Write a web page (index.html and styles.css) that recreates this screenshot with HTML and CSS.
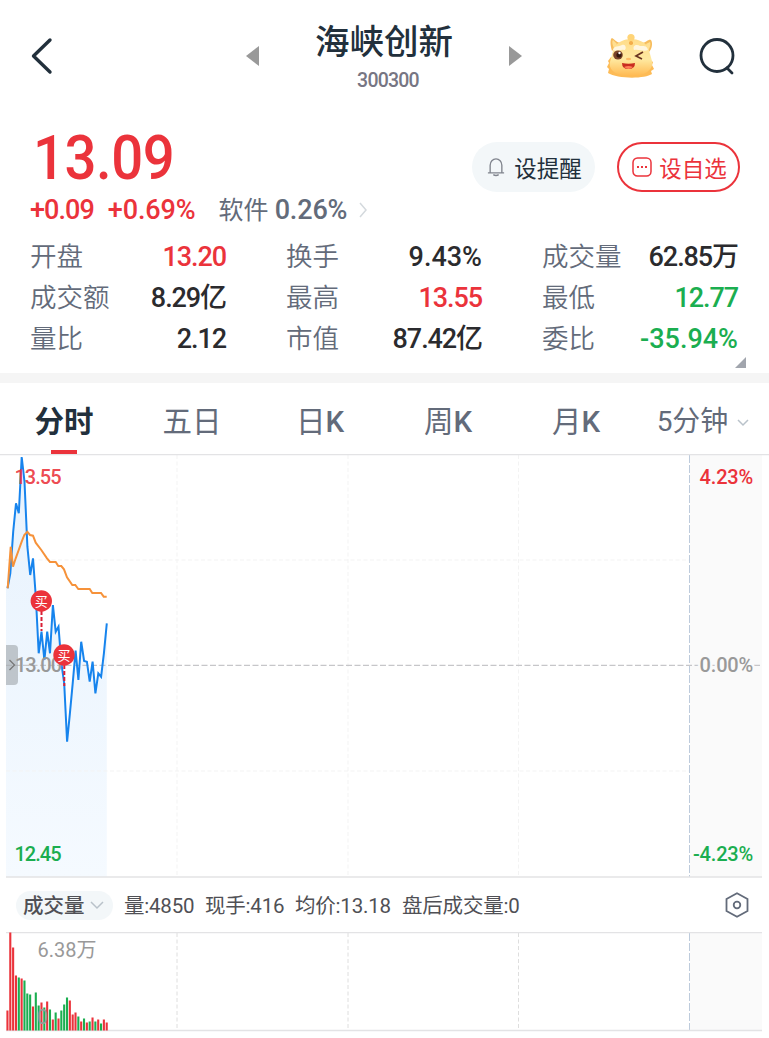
FILE: index.html
```
<!DOCTYPE html>
<html lang="zh-CN">
  <head>
    <meta charset="UTF-8" />
    <meta name="viewport" content="width=device-width, initial-scale=1.0" />
    <title>海峡创新 300300</title>
    <link rel="stylesheet" href="styles.css">
  </head>
  <body>
    <header class="header">
      <svg class="back" width="24" height="40" viewBox="0 0 24 40">
        <path d="M20 4 3.500 20 20 36" />
      </svg>
      <svg class="arrow prev" width="14" height="20" viewBox="0 0 14 20"><path d="M0 10 13 0V20Z" /></svg>
      <div class="title">
        <h1>海峡创新</h1>
        <span>300300</span>
      </div>
      <svg class="arrow next" width="14" height="20" viewBox="0 0 14 20"><path d="M14 10 1 0V20Z" /></svg>
      <svg class="mascot" width="50" height="46" viewBox="0 0 50 46">
        <defs>
          <linearGradient id="face" x1="0" y1="0" x2="0" y2="1">
            <stop offset="0" stop-color="#ffdc8a" />
            <stop offset=".55" stop-color="#ffe9a0" />
            <stop offset="1" stop-color="#ffb951" />
          </linearGradient>
        </defs>
        <path fill="#fdbb56" d="M5 24 2 28l1 2-2 4 2 2-1 4c9 6 37 6 44 1l-1-3 3-2-2-4 1-3-3-2-2-5Z" />
        <path fill="#f7bd5e" d="M6 18C4 12 4 6 6 5c2 1 4 4 8 5ZM37 10c4-1 5-4 8-3 2 3 1 9-2 12Z" />
        <path fill="#ffdf91" d="M8 15C6 11 6 8 7 7l4 4ZM40 11l4-2c1 2 0 6-2 8Z" />
        <path fill="url(#face)" d="M8 14C12 9 18 6 25 6s14 3 17 8l4 14c2 9-8 15-21 15S2 38 4 29Z" />
        <ellipse cx="25" cy="4.500" rx="3.600" ry="3.500" fill="#ffd477" />
        <rect x="23" y="8" width="4" height="4" rx="1.800" fill="#f3ad4b" />
        <path fill="#fff6df" d="M7 17c1-5 6-3 9-5 4-2 5 5 2 5-4-1-7 2-11 0ZM28 17c-2-5 3-6 6-4 3 0 7-1 8 4-4 2-9-1-14 0Z" />
        <ellipse cx="12" cy="22" rx="4.800" ry="4.600" fill="#7b452b" />
        <circle cx="13" cy="22" r="2.600" fill="#35170f" />
        <circle cx="13.500" cy="20" r="1.200" fill="#fff" />
        <path d="m37 19-7 4 6 3" fill="none" stroke="#6b3521" stroke-width="1.700" />
        <ellipse cx="22.500" cy="26" rx="2.600" ry="1.300" fill="#ffbd68" />
        <path fill="#c92d20" d="M16 30q6.500 1.500 13 0 0 6-6.500 6T16 30Z" />
        <path fill="#ff7d57" d="M18 34q4.500-2 9 0-4.500 4-9 0Z" />
      </svg>
      <svg class="search" width="36" height="38" viewBox="0 0 36 38">
        <circle cx="18" cy="18.500" r="16" />
        <path d="m28 31 5 5" stroke-linecap="round" />
      </svg>
    </header>

    <section class="quote">
      <div class="quote-top">
        <div class="price">13.09</div>
        <div class="actions">
          <button class="btn">
            <svg width="18" height="22" viewBox="0 0 20 22">
              <path d="M1 17.500h18M3.500 17V9a6.500 7 0 0 1 13 0v8M7 19.500q3 2 6 0" />
            </svg>
            设提醒
          </button>
          <button class="btn btn-red">
            <svg width="20" height="20" viewBox="0 0 20 20">
              <rect x="1" y="1" width="18" height="18" rx="4.500" />
              <path d="M5 10h2M9 10h2M13 10h2" stroke-width="2" />
            </svg>
            设自选
          </button>
        </div>
      </div>
      <div class="change">
        <span class="up">+0.09</span>
        <span class="up">+0.69%</span>
        <span class="sector">软件 <b>0.26%</b></span>
        <svg width="9" height="16" viewBox="0 0 9 16"><path d="m1 1 6 7-6 7" /></svg>
      </div>
      <dl class="stats">
        <div><dt>开盘</dt><dd class="up">13.20</dd></div>
        <div><dt>换手</dt><dd class="percent">9.43%</dd></div>
        <div><dt>成交量</dt><dd>62.85万</dd></div>
        <div><dt>成交额</dt><dd>8.29亿</dd></div>
        <div><dt>最高</dt><dd class="up">13.55</dd></div>
        <div><dt>最低</dt><dd class="down">12.77</dd></div>
        <div><dt>量比</dt><dd>2.12</dd></div>
        <div><dt>市值</dt><dd>87.42亿</dd></div>
        <div><dt>委比</dt><dd class="down percent">-35.94%</dd></div>
      </dl>
      <svg class="expand" width="11" height="11" viewBox="0 0 11 11"><path d="M11 0V11H0Z" /></svg>
    </section>

    <nav class="tabs">
      <a class="active">分时</a>
      <a>五日</a>
      <a>日<b>K</b></a>
      <a>周<b>K</b></a>
      <a>月<b>K</b></a>
      <a class="minutes"><span>5分钟</span>
        <svg width="12" height="8" viewBox="0 0 12 8"><path d="m1 1 5 5 5-5" /></svg>
      </a>
    </nav>

    <svg class="chart" width="769" height="424" viewBox="0 454 769 424">
      <defs>
        <linearGradient id="area" x1="0" y1="0" x2="0" y2="1">
          <stop offset="0" stop-color="#e7f2fd" />
          <stop offset="1" stop-color="#f5faff" />
        </linearGradient>
      </defs>
      <rect class="side" x="690" y="455" width="72" height="422" />
      <path class="area" fill="url(#area)" />
      <path class="grid faint" d="M6 560H689M6 771H689M177 455V877M348 455V877M518.500 455V877" />
      <path class="session" d="M689.500 455V877" />
      <path class="border" d="M0 454.500H769M6 877H762" />
      <path class="zero" d="M6 665.300H762" />
      <polyline class="line" />
      <polyline class="avg" points="7.700,588.300 10.700,546.700 13,566.700 15.700,558.300 18.700,550 21.700,541.700 24.300,535 27.300,531.700 30,535 33,535.700 35.700,542.700 41.300,550 47,558.300 50,562 55.700,562 58.300,566 61.300,566 64,569.300 67,577.300 72.300,585 75.300,585 78.300,589 89.700,589 92.300,593 101,593 103.700,596.700 106.700,596.700" />
      <path class="handle" d="M6 645h8q4 0 4 4v32q0 4-4 4H6Z" />
      <path class="handle-arrow" d="m9.500 660 5 5-5 5" />
      <text class="up top" x="14.500" y="484">13.55</text>
      <text class="up end" x="753" y="484">4.23%</text>
      <text class="down" x="14.500" y="861">12.45</text>
      <text class="down end" x="753" y="861">-4.23%</text>
      <text class="muted" x="15" y="672">13.00</text>
      <text class="muted end halo" x="753" y="672">0.00%</text>
      <g class="buy">
        <path d="M41.500 611V631M64.300 665V686" />
        <circle cx="41.300" cy="601" r="10.700" />
        <circle cx="64" cy="655" r="10.700" />
        <text x="41.300" y="606">买</text>
        <text x="64" y="660">买</text>
      </g>
    </svg>

    <div class="indicator">
      <span class="pill">成交量
        <svg width="14" height="9" viewBox="0 0 14 9"><path d="m1 1 6 6 6-6" /></svg>
      </span>
      <span class="w-vol">量:4850</span>
      <span class="w-now">现手:416</span>
      <span class="w-avg">均价:13.18</span>
      <span>盘后成交量:0</span>
      <svg class="settings" width="24" height="26" viewBox="0 0 24 26">
        <path d="M12 1.300 22.500 7v12L12 24.700 1.500 19V7Z" />
        <circle cx="12" cy="13" r="3.300" />
      </svg>
    </div>

    <svg class="chart volume" width="769" height="106" viewBox="0 932 769 106">
      <rect class="side" x="690" y="932" width="72" height="98" />
      <path class="grid" d="M177 933V1030M348 933V1030M518.500 933V1030" />
      <path class="session" d="M689.500 933V1030" />
      <path class="border" d="M6 932.500H762M6 1030.500H762" />
      <g class="bars"></g>
      <text class="muted" x="37.500" y="957">6.38万</text>
      <text class="muted" x="37" y="1024">0</text>
    </svg>

    <script>
      const START = 7.5;
      const STEP = 2.836;

      const prices = [
        588.3, 573.3, 531.7, 503.3, 513.3, 457, 481.7, 546.7, 575, 558.3, 598,
        653.3, 631.7, 660, 631.7, 653.3, 605, 631.7, 626.7, 663.3, 683.3, 741.7,
        713.3, 683.3, 650.7, 680, 641.7, 661, 661.7, 681.7, 661.7, 693.3, 673.3,
        676.7, 653.3, 623.3
      ];
      // negative = falling minute
      const volumes = [
        20, 98, 83, 55, -53, 52, -50, -37, -36, 24, -38, -25, 28, -23, 29, -21,
        11, -18, 12, -20, -26, -33, 30, 16, 18, -14, 9, -12, 8, -9, 13, -9, 11,
        -7, 11, 8
      ];

      const points = prices.map((y, i) => `${(START + i * STEP).toFixed(1)},${y}`);
      document.querySelector(".line").setAttribute("points", points.join(" "));
      document
        .querySelector(".area")
        .setAttribute("d", `M6 877V588L${points.join(" ")}V877Z`);

      document.querySelector(".bars").innerHTML = volumes
        .map((v, i) => {
          const h = Math.abs(v);
          const x = (START - 1.1 + i * STEP).toFixed(2);
          return `<rect class="${v > 0 ? "up" : "down"}" x="${x}" y="${1030.5 - h}" width="2.1" height="${h}" />`;
        })
        .join("");
    </script>
  </body>
</html>
```
FILE: styles.css
```
:root {
  --red: #eb333b;
  --green: #1bae50;
  --ink: #22303c;
  --text: #2b2b2e;
  --gray: #636b7a;
  --muted: #999;
}

* {
  box-sizing: border-box;
}

body {
  margin: 0;
  height: 1038px;
  overflow: hidden;
  font-family: Roboto, "Noto Sans CJK SC", sans-serif;
  letter-spacing: -0.03em;
  color: var(--text);
  background: #fff;
}

svg {
  display: block;
  flex: none;
  fill: none;
}

.up {
  color: var(--red);
}
.down {
  color: var(--green);
}

.header {
  display: flex;
  align-items: center;
  height: 112px;
  padding: 0 34px 0 30px;
}
.back {
  stroke: var(--ink);
  stroke-width: 3.4;
  stroke-linecap: round;
  stroke-linejoin: round;
}
.arrow {
  fill: var(--muted);
}
.prev {
  margin-left: 192px;
}
.title {
  width: 248px;
  text-align: center;
}
.title h1 {
  margin: 0;
  font-size: 34.5px;
  line-height: 48px;
  font-weight: 500;
  letter-spacing: 0;
  color: var(--ink);
}
.title span {
  display: block;
  padding-left: 8px;
  font-size: 19.5px;
  line-height: 29px;
  font-weight: 500;
  letter-spacing: -0.04em;
  color: #777683;
}
.mascot {
  margin-left: 84px;
}
.search {
  margin-left: auto;
  stroke: var(--ink);
  stroke-width: 2.8;
}

.quote {
  position: relative;
  height: 271px;
  padding: 20px 30px 0;
  border-bottom: 10px solid #f5f5f5;
}
.quote-top {
  display: flex;
  justify-content: space-between;
  height: 60px;
}
.price {
  padding-left: 3px;
  font-size: 61.5px;
  line-height: 53px;
  font-weight: 500;
  color: var(--red);
  transform: scaleX(0.915);
  transform-origin: 3px 0;
}
.actions {
  display: flex;
  gap: 22px;
  margin: 10px -1px 0 0;
}
.btn {
  display: flex;
  align-items: center;
  justify-content: center;
  gap: 9px;
  width: 123px;
  height: 50px;
  padding: 0 0 0 2px;
  border: 0;
  border-radius: 25px;
  font: 22.5px "Noto Sans CJK SC", sans-serif;
  color: var(--ink);
  background: #f3f7f9;
}
.btn svg {
  stroke: #81858e;
  stroke-width: 1.5;
}
.btn-red {
  gap: 7px;
  border: 2px solid var(--red);
  color: var(--red);
  background: #fff;
}
.btn-red svg {
  stroke: var(--red);
}

.change {
  display: flex;
  align-items: baseline;
  height: 36px;
  font-size: 27px;
  line-height: 37px;
  font-weight: 500;
}
.change .up {
  letter-spacing: -0.035em;
}
.change .up + .up {
  margin-left: 14px;
  letter-spacing: -0.005em;
}
.sector {
  margin: 0 12px 0 23px;
  font-size: 25px;
  font-weight: 400;
  letter-spacing: 0;
  color: var(--gray);
}
.sector b {
  font-size: 27px;
  font-weight: 500;
  letter-spacing: -0.005em;
}
.change svg {
  align-self: center;
  stroke: #d4d9dd;
  stroke-width: 1.5;
}

.stats {
  display: grid;
  grid-template-columns: repeat(3, 196px);
  grid-auto-rows: 41px;
  column-gap: 60px;
  margin: 6px 0 0;
}
.stats div {
  display: flex;
  justify-content: space-between;
  align-items: baseline;
  line-height: 41px;
  white-space: nowrap;
}
.stats dt {
  font: 350 26.5px/41px "Noto Sans CJK SC", sans-serif;
  letter-spacing: 0;
  color: var(--gray);
}
.stats dd {
  margin: 0;
  font-size: 27px;
  font-weight: 500;
  letter-spacing: -0.04em;
}
.stats .percent {
  letter-spacing: 0;
}
.expand {
  position: absolute;
  right: 23px;
  bottom: 5px;
  fill: #a1a5ad;
}

.tabs {
  display: flex;
  height: 71px;
}
.tabs a {
  display: flex;
  justify-content: center;
  position: relative;
  width: 128px;
  font-size: 29.5px;
  line-height: 78px;
  letter-spacing: 0;
  color: var(--gray);
}
.tabs b {
  font-weight: 500;
}
.tabs .active {
  font-weight: 700;
  color: var(--ink);
}
.tabs .active::after {
  content: "";
  position: absolute;
  left: 51px;
  bottom: 0;
  width: 26px;
  height: 4px;
  background: var(--red);
}
.tabs .minutes {
  gap: 9px;
  padding-right: 2px;
  font-size: 28px;
}
.minutes svg {
  margin-top: 36px;
}
.minutes svg,
.pill svg {
  stroke: #b9c2ca;
  stroke-width: 1.5;
}

.chart text {
  font-size: 20px;
  font-weight: 500;
  letter-spacing: -0.05em;
  fill: currentColor;
}
.chart .top {
  fill-opacity: 0.9;
}
.chart .end {
  letter-spacing: -0.01em;
  text-anchor: end;
}
.chart .muted {
  color: var(--muted);
}
.chart .halo {
  paint-order: stroke;
  stroke: #fafafa;
  stroke-width: 5px;
}
.side {
  fill: #fafafa;
}
.border {
  stroke: #e3e3e5;
  stroke-width: 1.5;
}
.grid {
  stroke: #dedede;
  stroke-dasharray: 4 2.5;
}
.faint {
  stroke: #f3f3f3;
}
.session {
  stroke: #bdcbdc;
  stroke-dasharray: 8 2;
}
.zero {
  stroke: #c6c6c9;
  stroke-width: 1.3;
  stroke-dasharray: 6 2.5;
}
.line {
  stroke: #1784ed;
  stroke-width: 2;
}
.avg {
  stroke: #f6923a;
  stroke-width: 2;
}
.handle {
  fill: #a5aaaf;
  fill-opacity: 0.65;
}
.handle-arrow {
  stroke: #777;
  stroke-width: 1.3;
}
.buy path {
  stroke: #d91f35;
  stroke-width: 2;
  stroke-dasharray: 4 2;
}
.buy circle {
  fill: var(--red);
}
.chart .buy text {
  font-size: 13px;
  font-weight: 400;
  letter-spacing: 0;
  text-anchor: middle;
  fill: #fff;
}
.bars rect {
  fill: currentColor;
}
.volume .muted {
  font-weight: 400;
  letter-spacing: 0;
}

.indicator {
  display: flex;
  align-items: center;
  height: 54px;
  padding: 0 20px 0 16px;
  font-size: 20.5px;
  line-height: 28px;
  letter-spacing: -0.01em;
  white-space: nowrap;
  color: #505055;
}
.indicator > span {
  padding-top: 1px;
}
.indicator .pill {
  display: flex;
  align-items: center;
  gap: 5px;
  width: 97px;
  height: 29px;
  margin-right: 11px;
  padding-left: 7px;
  border-radius: 15px;
  font-weight: 500;
  letter-spacing: 0;
  background: #f3f7f9;
}
.w-vol {
  width: 81px;
}
.w-now {
  width: 90px;
}
.w-avg {
  width: 107px;
}
.settings {
  margin-left: auto;
  stroke: #636b7a;
  stroke-width: 1.8;
}
```
